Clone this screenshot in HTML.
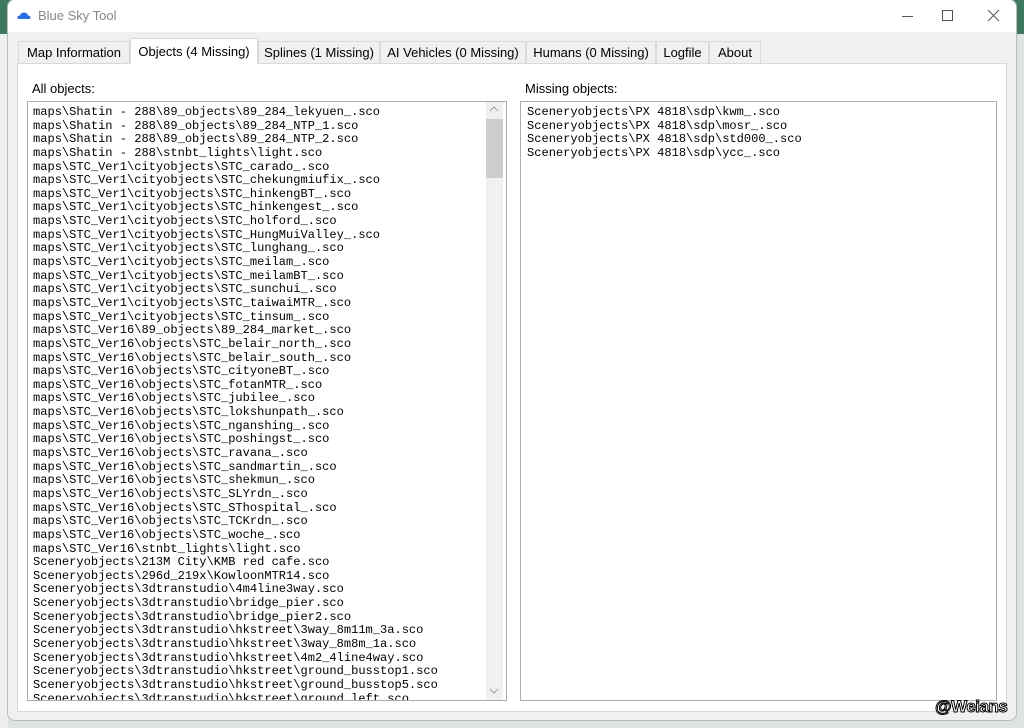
<!DOCTYPE html>
<html><head><style>
body{margin:0;width:1024px;height:728px;overflow:hidden;background:#dfe3e2;position:relative;font-family:"Liberation Sans",sans-serif;}
.bgtop{position:absolute;left:0;top:0;width:1024px;height:34px;background:#3f7a5e;}
.bgl{position:absolute;left:0;top:34px;width:8px;height:694px;background:#eef0f0;}
.win{position:absolute;left:8px;top:0;width:1008px;height:720px;background:#f0f0f0;border-radius:7px;overflow:hidden;box-shadow:0 0 0 1px #b8bcbc;}
.title{height:32px;background:#fff;position:relative;}
.title .t{position:absolute;left:30px;top:8px;font-size:13px;color:#888;}
.tab{position:absolute;top:41px;height:22px;border:1px solid #d9d9d9;border-bottom:none;background:#f0f0f0;font-size:13px;color:#000;line-height:22px;text-align:center;box-sizing:border-box;}
.tab.a{top:38px;height:26px;background:#fff;z-index:2;line-height:26px;}
.panel{position:absolute;left:9px;top:63px;width:990px;height:649px;background:#fff;border:1px solid #d9d9d9;box-sizing:border-box;}
.lbl{position:absolute;font-size:13px;color:#000;}
.list{position:absolute;background:#fff;border:1px solid #adadad;box-sizing:border-box;overflow:hidden;font-family:"Liberation Mono",monospace;font-size:12.05px;line-height:13.64px;color:#000;white-space:pre;}
</style></head><body>
<div class="bgtop"></div><div class="bgl"></div>
<div class="win">
<div class="title">
<svg style="position:absolute;left:9px;top:9px" width="14" height="12" viewBox="0 0 14 12"><path d="M2 10 Q0 10 0.5 8 Q1 6.5 3 6.5 Q4 3 7.5 3.5 Q10.5 4 11 6.5 Q13.5 6.8 13.5 8.5 Q13.5 10 12 10 Z" fill="#2a6de0"/></svg>
<span class="t">Blue Sky Tool</span>
<svg style="position:absolute;left:893px;top:9px" width="14" height="14"><path d="M1 7.5H12" stroke="#555" stroke-width="1"/></svg>
<svg style="position:absolute;left:933px;top:9px" width="14" height="14"><rect x="1.5" y="1.5" width="10" height="10" fill="none" stroke="#555"/></svg>
<svg style="position:absolute;left:979px;top:9px" width="14" height="14"><path d="M1 1L12 12M12 1L1 12" stroke="#555"/></svg>
</div>
<div class="tab" style="left:10px;width:112px">Map Information</div>
<div class="tab a" style="left:122px;width:128px">Objects (4 Missing)</div>
<div class="tab" style="left:250px;width:122px">Splines (1 Missing)</div>
<div class="tab" style="left:372px;width:146px">AI Vehicles (0 Missing)</div>
<div class="tab" style="left:518px;width:130px">Humans (0 Missing)</div>
<div class="tab" style="left:648px;width:53px">Logfile</div>
<div class="tab" style="left:701px;width:52px">About</div>
<div class="panel"></div>
<div class="lbl" style="left:24px;top:81px">All objects:</div>
<div class="lbl" style="left:517px;top:81px">Missing objects:</div>
<div class="list" style="left:19px;top:101px;width:480px;height:600px;padding:4px 0 0 5px;">maps\Shatin - 288\89_objects\89_284_lekyuen_.sco
maps\Shatin - 288\89_objects\89_284_NTP_1.sco
maps\Shatin - 288\89_objects\89_284_NTP_2.sco
maps\Shatin - 288\stnbt_lights\light.sco
maps\STC_Ver1\cityobjects\STC_carado_.sco
maps\STC_Ver1\cityobjects\STC_chekungmiufix_.sco
maps\STC_Ver1\cityobjects\STC_hinkengBT_.sco
maps\STC_Ver1\cityobjects\STC_hinkengest_.sco
maps\STC_Ver1\cityobjects\STC_holford_.sco
maps\STC_Ver1\cityobjects\STC_HungMuiValley_.sco
maps\STC_Ver1\cityobjects\STC_lunghang_.sco
maps\STC_Ver1\cityobjects\STC_meilam_.sco
maps\STC_Ver1\cityobjects\STC_meilamBT_.sco
maps\STC_Ver1\cityobjects\STC_sunchui_.sco
maps\STC_Ver1\cityobjects\STC_taiwaiMTR_.sco
maps\STC_Ver1\cityobjects\STC_tinsum_.sco
maps\STC_Ver16\89_objects\89_284_market_.sco
maps\STC_Ver16\objects\STC_belair_north_.sco
maps\STC_Ver16\objects\STC_belair_south_.sco
maps\STC_Ver16\objects\STC_cityoneBT_.sco
maps\STC_Ver16\objects\STC_fotanMTR_.sco
maps\STC_Ver16\objects\STC_jubilee_.sco
maps\STC_Ver16\objects\STC_lokshunpath_.sco
maps\STC_Ver16\objects\STC_nganshing_.sco
maps\STC_Ver16\objects\STC_poshingst_.sco
maps\STC_Ver16\objects\STC_ravana_.sco
maps\STC_Ver16\objects\STC_sandmartin_.sco
maps\STC_Ver16\objects\STC_shekmun_.sco
maps\STC_Ver16\objects\STC_SLYrdn_.sco
maps\STC_Ver16\objects\STC_SThospital_.sco
maps\STC_Ver16\objects\STC_TCKrdn_.sco
maps\STC_Ver16\objects\STC_woche_.sco
maps\STC_Ver16\stnbt_lights\light.sco
Sceneryobjects\213M City\KMB red cafe.sco
Sceneryobjects\296d_219x\KowloonMTR14.sco
Sceneryobjects\3dtranstudio\4m4line3way.sco
Sceneryobjects\3dtranstudio\bridge_pier.sco
Sceneryobjects\3dtranstudio\bridge_pier2.sco
Sceneryobjects\3dtranstudio\hkstreet\3way_8m11m_3a.sco
Sceneryobjects\3dtranstudio\hkstreet\3way_8m8m_1a.sco
Sceneryobjects\3dtranstudio\hkstreet\4m2_4line4way.sco
Sceneryobjects\3dtranstudio\hkstreet\ground_busstop1.sco
Sceneryobjects\3dtranstudio\hkstreet\ground_busstop5.sco
Sceneryobjects\3dtranstudio\hkstreet\ground_left.sco</div>
<div style="position:absolute;left:478px;top:102px;width:17px;height:598px;background:#f0f0f0;"></div>
<div style="position:absolute;left:478px;top:119px;width:17px;height:59px;background:#cdcdcd;"></div>
<svg style="position:absolute;left:481px;top:105px" width="10" height="8"><path d="M1 6L5 2L9 6" fill="none" stroke="#a0a0a0"/></svg>
<svg style="position:absolute;left:481px;top:687px" width="10" height="8"><path d="M1 2L5 6L9 2" fill="none" stroke="#a0a0a0"/></svg>
<div class="list" style="left:512px;top:101px;width:477px;height:600px;padding:4px 0 0 6px;">Sceneryobjects\PX 4818\sdp\kwm_.sco
Sceneryobjects\PX 4818\sdp\mosr_.sco
Sceneryobjects\PX 4818\sdp\std000_.sco
Sceneryobjects\PX 4818\sdp\ycc_.sco</div>
</div>
<div style="position:absolute;left:935px;top:697px;font-size:17px;font-weight:bold;color:#fff;-webkit-text-stroke:1px #000;letter-spacing:-0.5px">@Weians</div>
</body></html>
